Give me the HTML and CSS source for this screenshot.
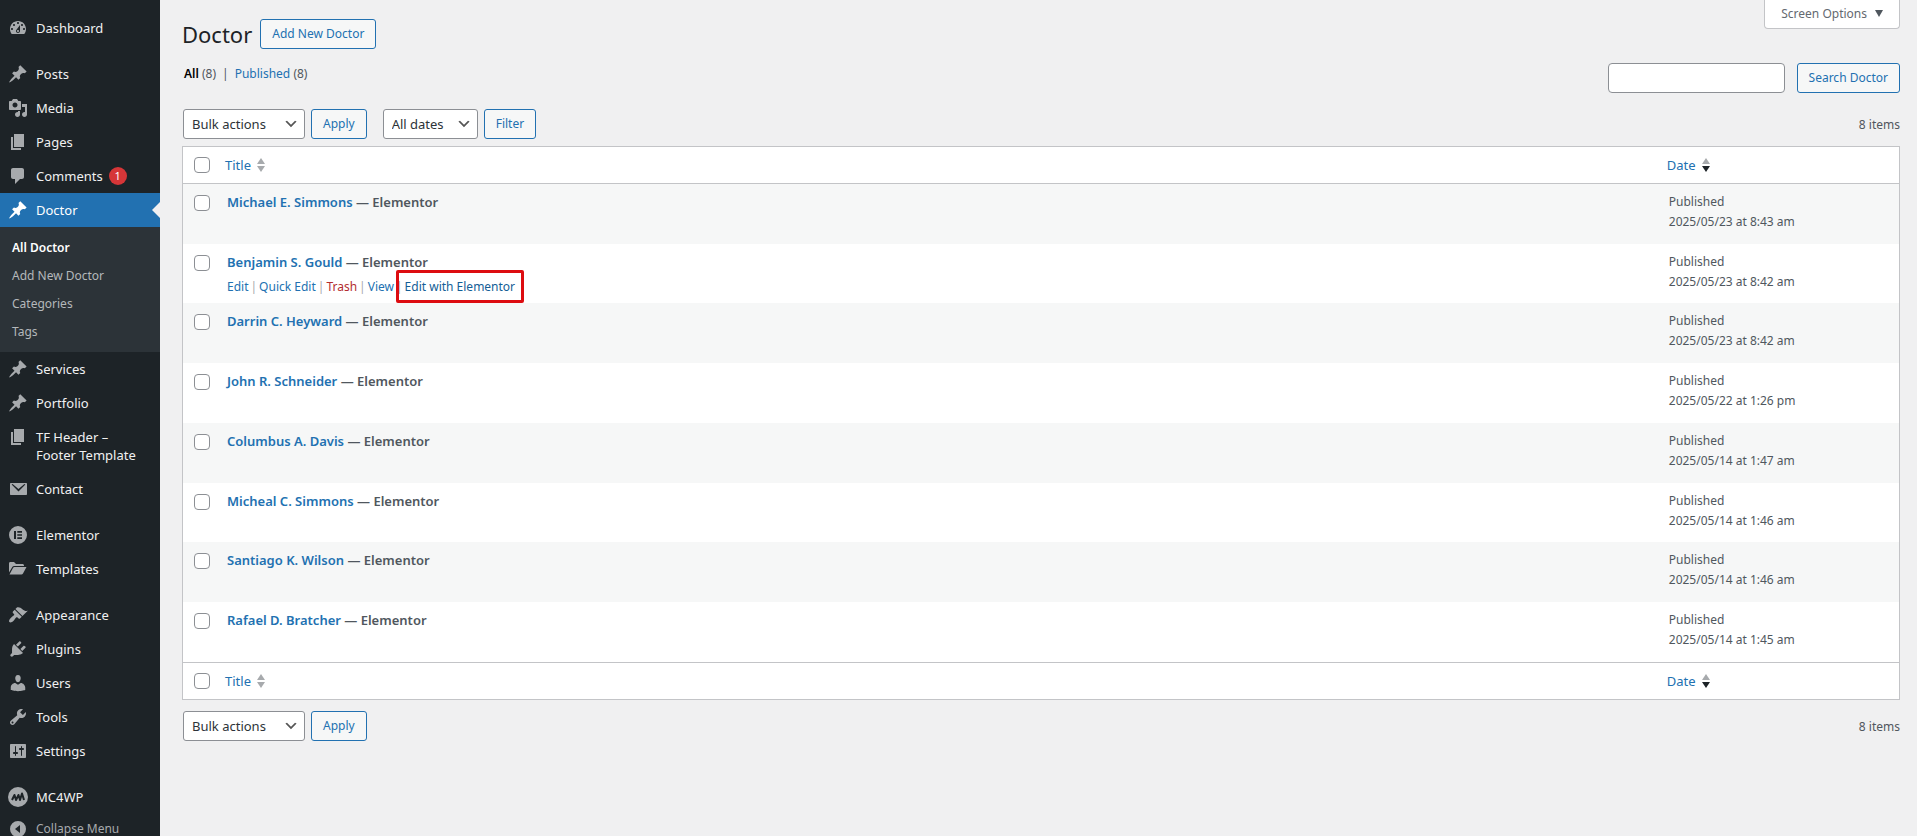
FILE: index.html
```html
<!DOCTYPE html>
<html lang="en">
<head>
  <meta charset="UTF-8">
  <meta name="viewport" content="width=device-width, initial-scale=1.0">
  <title>Doctor</title>
  <link rel="stylesheet" href="styles.css">
</head>
<body>

  <svg class="sprite" aria-hidden="true">
    <symbol id="i-dashboard" viewBox="0 0 20 20"><path d="M3.76 16h12.48c1.1-1.37 1.76-3.11 1.76-5 0-4.42-3.58-8-8-8s-8 3.58-8 8c0 1.89.66 3.63 1.76 5zM10 4c.55 0 1 .45 1 1s-.45 1-1 1-1-.45-1-1 .45-1 1-1zM6 6c.55 0 1 .45 1 1s-.45 1-1 1-1-.45-1-1 .45-1 1-1zm8 0c.55 0 1 .45 1 1s-.45 1-1 1-1-.45-1-1 .45-1 1-1zm-5.37 5.55L12 7v6c0 1.1-.9 2-2 2s-2-.9-2-2c0-.57.24-1.08.63-1.45zM4 10c.55 0 1 .45 1 1s-.45 1-1 1-1-.45-1-1 .45-1 1-1zm12 0c.55 0 1 .45 1 1s-.45 1-1 1-1-.45-1-1 .45-1 1-1zm-5 3c0-.55-.45-1-1-1s-1 .45-1 1 .45 1 1 1 1-.45 1-1z"/></symbol>
    <symbol id="i-pin" viewBox="0 0 20 20"><path d="M10.44 3.02l1.82-1.82 6.36 6.35-1.83 1.82c-1.05-.68-2.48-.57-3.41.36l-.75.75c-.92.93-1.04 2.35-.35 3.41l-1.83 1.82-2.41-2.41-2.8 2.79c-.42.42-3.38 2.71-3.8 2.29s1.86-3.39 2.28-3.81l2.79-2.79L4.1 9.36l1.83-1.82c1.05.69 2.48.57 3.4-.36l.75-.75c.93-.92 1.05-2.35.36-3.41z"/></symbol>
    <symbol id="i-media" viewBox="0 0 20 20"><path d="M13 11V4c0-.55-.45-1-1-1h-1.67L9 1H5L3.67 3H2c-.55 0-1 .45-1 1v7c0 .55.45 1 1 1h10c.55 0 1-.45 1-1zM7 4.5c1.38 0 2.5 1.12 2.5 2.5S8.38 9.5 7 9.5 4.5 8.38 4.5 7 5.62 4.5 7 4.5zM14 6h5v10.5c0 1.38-1.12 2.5-2.5 2.5S14 17.88 14 16.5s1.12-2.5 2.5-2.5c.17 0 .34.02.5.05V9h-3V6zm-4 8.05V13h2v3.5c0 1.38-1.12 2.5-2.5 2.5S7 17.88 7 16.5 8.12 14 9.5 14c.17 0 .34.02.5.05z"/></symbol>
    <symbol id="i-page" viewBox="0 0 20 20"><path d="M6 15V2h10v13H6zm-1 1h8v2H3V5h2v11z"/></symbol>
    <symbol id="i-comment" viewBox="0 0 20 20"><path d="M5 2h9c1.1 0 2 .9 2 2v7c0 1.1-.9 2-2 2h-2l-5 5v-5H5c-1.1 0-2-.9-2-2V4c0-1.1.9-2 2-2z"/></symbol>
    <symbol id="i-mail" viewBox="0 0 20 20"><path d="M3 4h15c.7 0 1 .4 1 1v10c0 .7-.4 1-1 1H3c-.7 0-1-.4-1-1V5c0-.6.4-1 1-1zm.6 1.4 6.9 7 6.9-7-1-.5-5.9 5-5.9-5z"/></symbol>
    <symbol id="i-elementor" viewBox="0 0 20 20"><path fill-rule="evenodd" d="M10 1a9 9 0 1 0 0 18 9 9 0 0 0 0-18zM6 6h2v8H6zm3.300 0H14v1.700H9.300zm0 3.150H14v1.700H9.300zm0 3.150H14V14H9.300z"/></symbol>
    <symbol id="i-folder" viewBox="0 0 20 20"><path d="M1 13.500V4.500C1 3.700 1.500 3 2.300 3H6l2 2h6.500c.800 0 1.500.700 1.500 1.500V7H6.500C5.300 7 4.500 7.500 4 8.500zM1.500 15.500 5 9c.300-.700.800-1 1.500-1H18.500L15 14.500c-.400.700-.900 1-1.600 1z"/></symbol>
    <symbol id="i-brush" viewBox="0 0 20 20"><path d="M14.480 11.060L7.410 3.990l1.500-1.500c.5-.56 2.300-.47 3.510.32 1.210.8 1.430 1.280 2.910 2.100 1.180.64 2.450 1.260 4.450.85zm-.71.71L6.700 4.700 4.930 6.470c-.39.39-.39 1.020 0 1.410l1.060 1.060c.39.39.39 1.030 0 1.420-.6.6-1.430 1.110-2.210 1.690-.35.26-.7.53-1.010.84C1.430 14.230.4 16.080 1.400 17.070c.99 1 2.840-.03 4.180-1.360.31-.31.58-.66.85-1.020.57-.78 1.080-1.610 1.690-2.210.39-.39 1.020-.39 1.410 0l1.060 1.060c.39.39 1.020.39 1.410 0z"/></symbol>
    <symbol id="i-plug" viewBox="0 0 20 20"><path d="M13.110 4.360L9.870 7.600 8 5.730l3.240-3.240c.35-.34 1.050-.2 1.560.32.52.51.66 1.210.31 1.550zm-8 1.770l.91-1.120 9.010 9.010-1.190.84c-.71.71-2.630 1.160-3.820 1.160H6.140L4.900 17.260c-.59.59-1.540.59-2.120 0-.59-.58-.59-1.530 0-2.120l1.240-1.240v-3.880c0-1.130.4-3.190 1.090-3.890zm7.260 3.970l3.240-3.240c.34-.35 1.040-.21 1.550.31.52.51.66 1.210.31 1.550l-3.240 3.250z"/></symbol>
    <symbol id="i-user" viewBox="0 0 20 20"><path d="M10 9.250c-2.270 0-2.730-3.440-2.730-3.440C7 4.020 7.820 2 9.970 2c2.160 0 2.980 2.020 2.710 3.810 0 0-.41 3.440-2.680 3.440zm0 2.570L12.720 10c2.390 0 4.520 2.330 4.520 4.530v2.490s-3.650 1.130-7.240 1.130c-3.650 0-7.240-1.130-7.240-1.130v-2.490c0-2.250 1.940-4.480 4.470-4.480z"/></symbol>
    <symbol id="i-wrench" viewBox="0 0 20 20"><path d="M16.680 9.770c-1.340 1.340-3.300 1.670-4.950.99l-5.410 6.520c-.99.99-2.590.99-3.580 0s-.99-2.590 0-3.570l6.520-5.420c-.68-1.650-.35-3.610.99-4.950 1.280-1.280 3.120-1.620 4.720-1.060l-2.890 2.890 2.820 2.820 2.860-2.870c.53 1.580.18 3.390-1.080 4.650zM3.810 16.210c.4.39 1.040.39 1.430 0 .4-.4.4-1.040 0-1.430-.39-.4-1.030-.4-1.430 0-.39.39-.39 1.030 0 1.430z"/></symbol>
    <symbol id="i-sliders" viewBox="0 0 20 20"><path d="M18 16V4c0-.55-.45-1-1-1H3c-.55 0-1 .45-1 1v12c0 .55.45 1 1 1h14c.55 0 1-.45 1-1zM8 11h1c.55 0 1 .45 1 1s-.45 1-1 1H8v1.500c0 .28-.22.5-.5.5s-.5-.22-.5-.5V13H6c-.55 0-1-.45-1-1s.45-1 1-1h1V5.500c0-.28.22-.5.5-.5s.5.22.5.5V11zm5-2h-1c-.55 0-1-.45-1-1s.45-1 1-1h1V5.500c0-.28.22-.5.5-.5s.5.22.5.5V7h1c.55 0 1 .45 1 1s-.45 1-1 1h-1v5.500c0 .28-.22.5-.5.5s-.5-.22-.5-.5V9z"/></symbol>
    <symbol id="i-mc" viewBox="0 0 20 20"><circle cx="10" cy="10" r="10"/><path d="M4 13 6.500 8 8 13 10.500 8 12 13 14 6.500 16 13" fill="none" stroke="#1d2327" stroke-width="2" stroke-linejoin="round"/></symbol>
    <symbol id="i-collapse" viewBox="0 0 20 20"><path fill-rule="evenodd" d="M10 2a8 8 0 1 0 0 16 8 8 0 0 0 0-16zm2 4v8l-5-4z"/></symbol>
    <symbol id="i-sort" viewBox="0 0 8 16"><path class="up" d="M0 7 4 1l4 6z"/><path class="down" d="M0 9h8l-4 6z"/></symbol>
  </svg>

  <div class="admin">

    <nav class="menu">
      <a class="menu-item" href="#"><svg class="icon"><use href="#i-dashboard"/></svg>Dashboard</a>
      <hr>
      <a class="menu-item" href="#"><svg class="icon"><use href="#i-pin"/></svg>Posts</a>
      <a class="menu-item" href="#"><svg class="icon"><use href="#i-media"/></svg>Media</a>
      <a class="menu-item" href="#"><svg class="icon"><use href="#i-page"/></svg>Pages</a>
      <a class="menu-item" href="#"><svg class="icon"><use href="#i-comment"/></svg>Comments <span class="badge">1</span></a>
      <a class="menu-item current" href="#"><svg class="icon"><use href="#i-pin"/></svg>Doctor</a>
      <div class="submenu">
        <a class="active" href="#">All Doctor</a>
        <a href="#">Add New Doctor</a>
        <a href="#">Categories</a>
        <a href="#">Tags</a>
      </div>
      <a class="menu-item" href="#"><svg class="icon"><use href="#i-pin"/></svg>Services</a>
      <a class="menu-item" href="#"><svg class="icon"><use href="#i-pin"/></svg>Portfolio</a>
      <a class="menu-item" href="#"><svg class="icon"><use href="#i-page"/></svg>TF Header – Footer Template</a>
      <a class="menu-item" href="#"><svg class="icon"><use href="#i-mail"/></svg>Contact</a>
      <hr>
      <a class="menu-item" href="#"><svg class="icon"><use href="#i-elementor"/></svg>Elementor</a>
      <a class="menu-item" href="#"><svg class="icon"><use href="#i-folder"/></svg>Templates</a>
      <hr>
      <a class="menu-item" href="#"><svg class="icon"><use href="#i-brush"/></svg>Appearance</a>
      <a class="menu-item" href="#"><svg class="icon"><use href="#i-plug"/></svg>Plugins</a>
      <a class="menu-item" href="#"><svg class="icon"><use href="#i-user"/></svg>Users</a>
      <a class="menu-item" href="#"><svg class="icon"><use href="#i-wrench"/></svg>Tools</a>
      <a class="menu-item" href="#"><svg class="icon"><use href="#i-sliders"/></svg>Settings</a>
      <hr>
      <a class="menu-item" href="#"><svg class="icon"><use href="#i-mc"/></svg>MC4WP</a>
      <button class="menu-item collapse" type="button"><svg class="icon"><use href="#i-collapse"/></svg>Collapse Menu</button>
    </nav>

    <main class="content">
      <header class="page-head">
        <div class="title-row">
          <h1>Doctor</h1>
          <a class="button" href="#">Add New Doctor</a>
        </div>
        <button class="screen-options" type="button">Screen Options <span class="caret"></span></button>
      </header>

      <div class="filters">
        <div class="views">
          <a class="active" href="#">All</a> <span>(8)</span><span class="bar">|</span><a href="#">Published</a> <span>(8)</span>
        </div>
        <form class="search">
          <input type="search" aria-label="Search Doctor">
          <button class="button" type="button">Search Doctor</button>
        </form>
      </div>

      <div class="tablenav top">
        <select class="bulk" aria-label="Select bulk action"><option>Bulk actions</option></select>
        <button class="button" type="button">Apply</button>
        <select class="dates" aria-label="Filter by date"><option>All dates</option></select>
        <button class="button" type="button">Filter</button>
        <span class="count">8 items</span>
      </div>

      <table class="list">
        <thead>
          <tr>
            <th class="check"><input type="checkbox" aria-label="Select All"></th>
            <th><a href="#">Title <svg class="sort"><use href="#i-sort"/></svg></a></th>
            <th class="date"><a href="#">Date <svg class="sort desc"><use href="#i-sort"/></svg></a></th>
          </tr>
        </thead>
        <tbody>
          <tr>
            <td class="check"><input type="checkbox" aria-label="Select Michael E. Simmons"></td>
            <td><strong><a href="#">Michael E. Simmons</a> — Elementor</strong></td>
            <td>Published<br>2025/05/23 at 8:43 am</td>
          </tr>
          <tr>
            <td class="check"><input type="checkbox" aria-label="Select Benjamin S. Gould"></td>
            <td>
              <strong><a href="#">Benjamin S. Gould</a> — Elementor</strong>
              <div class="row-actions">
                <a href="#">Edit</a><i>|</i><a href="#">Quick Edit</a><i>|</i><a class="trash" href="#">Trash</a><i>|</i><a href="#">View</a><i>|</i><a class="marked" href="#">Edit with Elementor</a>
              </div>
            </td>
            <td>Published<br>2025/05/23 at 8:42 am</td>
          </tr>
          <tr>
            <td class="check"><input type="checkbox" aria-label="Select Darrin C. Heyward"></td>
            <td><strong><a href="#">Darrin C. Heyward</a> — Elementor</strong></td>
            <td>Published<br>2025/05/23 at 8:42 am</td>
          </tr>
          <tr>
            <td class="check"><input type="checkbox" aria-label="Select John R. Schneider"></td>
            <td><strong><a href="#">John R. Schneider</a> — Elementor</strong></td>
            <td>Published<br>2025/05/22 at 1:26 pm</td>
          </tr>
          <tr>
            <td class="check"><input type="checkbox" aria-label="Select Columbus A. Davis"></td>
            <td><strong><a href="#">Columbus A. Davis</a> — Elementor</strong></td>
            <td>Published<br>2025/05/14 at 1:47 am</td>
          </tr>
          <tr>
            <td class="check"><input type="checkbox" aria-label="Select Micheal C. Simmons"></td>
            <td><strong><a href="#">Micheal C. Simmons</a> — Elementor</strong></td>
            <td>Published<br>2025/05/14 at 1:46 am</td>
          </tr>
          <tr>
            <td class="check"><input type="checkbox" aria-label="Select Santiago K. Wilson"></td>
            <td><strong><a href="#">Santiago K. Wilson</a> — Elementor</strong></td>
            <td>Published<br>2025/05/14 at 1:46 am</td>
          </tr>
          <tr>
            <td class="check"><input type="checkbox" aria-label="Select Rafael D. Bratcher"></td>
            <td><strong><a href="#">Rafael D. Bratcher</a> — Elementor</strong></td>
            <td>Published<br>2025/05/14 at 1:45 am</td>
          </tr>
        </tbody>
        <tfoot>
          <tr>
            <th class="check"><input type="checkbox" aria-label="Select All"></th>
            <th><a href="#">Title <svg class="sort"><use href="#i-sort"/></svg></a></th>
            <th class="date"><a href="#">Date <svg class="sort desc"><use href="#i-sort"/></svg></a></th>
          </tr>
        </tfoot>
      </table>

      <div class="tablenav bottom">
        <select class="bulk" aria-label="Select bulk action"><option>Bulk actions</option></select>
        <button class="button" type="button">Apply</button>
        <span class="count">8 items</span>
      </div>
    </main>

  </div>

</body>
</html>
```
FILE: styles.css
```css
* {
  box-sizing: border-box;
}

body {
  margin: 0;
  background: #f0f0f1;
  color: #50575e;
  font-family: 'Noto Sans', 'Open Sans', sans-serif;
  font-size: 12px;
}

a {
  color: #2271b1;
  text-decoration: none;
}

button, input, select {
  font-family: inherit;
}

.sprite {
  display: none;
}

.admin {
  display: flex;
  height: 100vh;
  overflow: hidden;
}

/* Sidebar menu */
.menu {
  flex: none;
  width: 160px;
  padding-top: 11px;
  background: #1d2327;
}

.menu hr {
  height: 12px;
  margin: 0;
  border: 0;
}

.menu-item {
  display: flex;
  gap: 8px;
  width: 100%;
  padding: 8px 16px 8px 8px;
  color: #f0f0f1;
  font-size: 13px;
  line-height: 18px;
  text-align: left;
}

.icon {
  flex: none;
  width: 20px;
  height: 20px;
  margin: -1px 0;
  fill: #a7aaad;
}

.badge {
  width: 18px;
  height: 18px;
  margin-left: -2px;
  border-radius: 50%;
  background: #d63638;
  color: #fff;
  font-size: 11px;
  text-align: center;
}

.current {
  position: relative;
  background: #2271b1;
  color: #fff;
}

.current .icon {
  fill: #fff;
}

.current::after {
  content: "";
  position: absolute;
  top: 9px;
  right: 0;
  border: 8px solid transparent;
  border-left: 0;
  border-right-color: #f0f0f1;
}

.submenu {
  padding: 7px 0 6px;
  background: #2c3338;
}

.submenu a {
  display: block;
  padding: 0 12px;
  color: #b4b8bb;
  line-height: 28px;
}

.submenu .active {
  color: #fff;
  font-weight: 600;
}

.collapse {
  padding-top: 6px;
  border: 0;
  background: none;
  color: #a7aaad;
  font-size: 12px;
}

/* Page header */
.content {
  flex: 1;
  padding: 0 17px 0 22px;
}

.page-head {
  display: flex;
  justify-content: space-between;
  align-items: flex-start;
}

.title-row {
  display: flex;
  align-items: center;
  gap: 8px;
  padding-top: 19px;
}

h1 {
  margin: 0;
  color: #1d2327;
  font-size: 22px;
  font-weight: 400;
  line-height: 30px;
}

.button {
  height: 30px;
  padding: 0 11px;
  border: 1px solid #2271b1;
  border-radius: 3px;
  background: #f6f7f7;
  color: #2271b1;
  font-size: 12px;
  line-height: 28px;
}

.screen-options {
  display: flex;
  align-items: center;
  gap: 8px;
  height: 29px;
  padding: 0 16px 2px;
  border: 1px solid #c3c4c7;
  border-top: 0;
  border-radius: 0 0 4px 4px;
  background: #fff;
  color: #646970;
  font-size: 12px;
}

.caret {
  border: 4px solid transparent;
  border-top: 7px solid #50575e;
  border-bottom: 0;
}

.filters {
  display: flex;
  justify-content: space-between;
  padding-top: 14px;
}

.views {
  padding-left: 2px;
  line-height: 22px;
}

.views .active {
  color: #000;
  font-weight: 600;
}

.views .bar {
  margin: 0 6px;
}

.search {
  display: flex;
  gap: 12px;
}

.search input {
  width: 177px;
  height: 30px;
  border: 1px solid #8c8f94;
  border-radius: 4px;
  background: #fff;
}

/* Bulk action bars */
.tablenav {
  display: flex;
  align-items: center;
  gap: 6px;
  padding-left: 1px;
}

.top {
  padding-top: 16px;
  padding-bottom: 7px;
}

.bottom {
  padding-top: 11px;
}

select {
  height: 30px;
  padding: 0 8px;
  appearance: none;
  border: 1px solid #8c8f94;
  border-radius: 3px;
  background: #fff url("data:image/svg+xml,%3Csvg xmlns='http://www.w3.org/2000/svg' viewBox='0 0 20 20'%3E%3Cpath d='M5 6l5 5 5-5 2 1-7 7-7-7z' fill='%23555'/%3E%3C/svg%3E") no-repeat right 5px center / 16px;
  color: #2c3338;
  font-size: 13px;
}

.bulk {
  width: 122px;
}

.dates {
  width: 95px;
  margin-left: 10px;
}

.count {
  margin-left: auto;
}

/* Posts table */
.list {
  width: 100%;
  table-layout: fixed;
  border: 1px solid #c3c4c7;
  border-spacing: 0;
  background: #fff;
}

.list th {
  height: 37px;
  padding: 0 8px;
  font-size: 13px;
  font-weight: 400;
  text-align: left;
}

.list td {
  height: 60px;
  padding: 8px 10px 0;
  line-height: 20px;
  vertical-align: top;
}

.list tr:nth-child(4n+2) td {
  height: 59px;
}

.list .check {
  width: 34px;
  padding-right: 0;
  padding-left: 11px;
}

.list .date {
  width: 14%;
}

thead th {
  border-bottom: 1px solid #c3c4c7;
}

tfoot th {
  border-top: 1px solid #c3c4c7;
}

tbody tr:nth-child(odd) {
  background: #f6f7f7;
}

td strong {
  display: block;
  font-size: 13px;
  font-weight: 600;
}

input[type="checkbox"] {
  display: block;
  width: 16px;
  height: 16px;
  margin: 0;
  appearance: none;
  border: 1px solid #8c8f94;
  border-radius: 4px;
  background: #fff;
}

td input[type="checkbox"] {
  margin-top: 3px;
}

th a {
  display: flex;
  align-items: center;
  gap: 6px;
}

.sort {
  width: 8px;
  height: 16px;
  fill: #a7aaad;
}

.desc {
  --down: #1d2327;
}

.down {
  fill: var(--down, #a7aaad);
}

.row-actions {
  display: flex;
  gap: 2px;
  padding-top: 5px;
}

.row-actions i {
  color: #a7aaad;
  font-style: normal;
}

.row-actions .trash {
  color: #b32d2e;
}

.row-actions .marked {
  position: relative;
  color: #135e96;
}

.marked::after {
  content: "";
  position: absolute;
  inset: -7px -9px -6px;
  border: 3px solid #dd0c10;
  border-radius: 2px;
}
```
